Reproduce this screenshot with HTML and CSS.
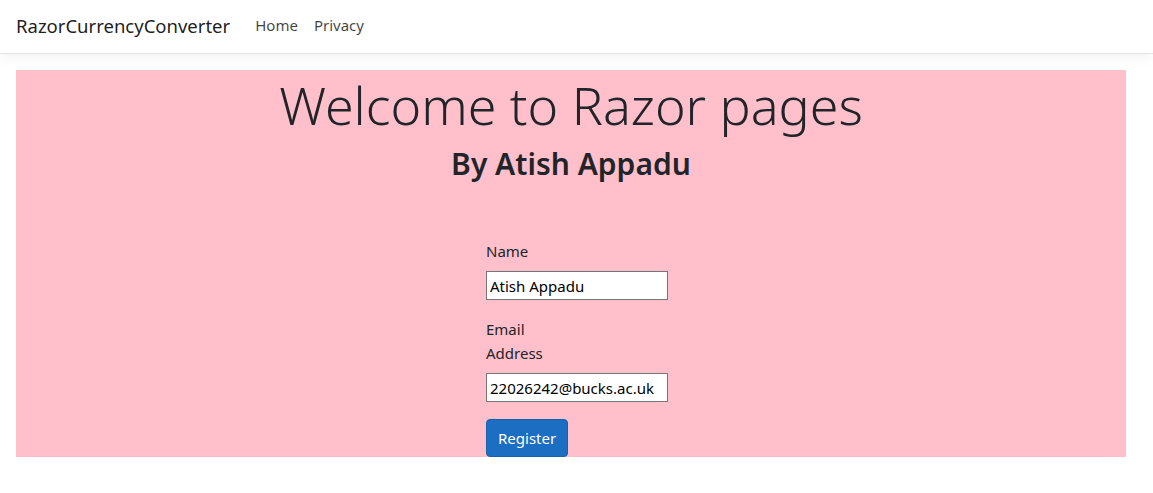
FILE: index.html
```html
<!DOCTYPE html>
<html lang="en">
<head>
<meta charset="utf-8">
<title>RazorCurrencyConverter</title>
<link rel="stylesheet" href="styles.css">
</head>
<body>
<header class="navbar">
  <div class="nav-inner">
    <a class="brand" href="#">RazorCurrencyConverter</a>
    <nav class="links">
      <a class="nav-link" href="#">Home</a>
      <a class="nav-link" href="#">Privacy</a>
    </nav>
  </div>
</header>
<main class="container">
  <section class="hero">
    <h1 class="display">Welcome to Razor pages</h1>
    <h2 class="byline">By Atish Appadu</h2>
    <form class="reg-form">
      <label class="field-label" for="name">Name</label>
      <input class="field-input" id="name" type="text" value="Atish Appadu">
      <label class="field-label" for="email">Email Address</label>
      <input class="field-input" id="email" type="text" value="22026242@bucks.ac.uk">
      <button class="btn-primary" type="button">Register</button>
    </form>
  </section>
</main>
</body>
</html>
```
FILE: styles.css
```css
* { box-sizing: border-box; }
html, body { margin: 0; padding: 0; }
body {
  font-family: "Noto Sans", "Open Sans", sans-serif;
  color: #212529;
  background: #fff;
  font-size: 15px;
  line-height: 1.5;
}
.navbar {
  height: 54px;
  background: #fff;
  border-bottom: 1px solid #e3e3e3;
  box-shadow: 0 4px 12px rgba(0,0,0,0.05);
  margin-bottom: 16px;
}
.nav-inner {
  height: 53px;
  padding: 0 16px;
  display: flex;
  align-items: center;
}
.brand {
  font-size: 18.5px;
  color: rgba(0,0,0,0.9);
  text-decoration: none;
  margin-right: 17px;
  margin-top: -1px;
}
.links { display: flex; }
.nav-link {
  font-size: 15px;
  color: rgba(0,0,0,0.75);
  text-decoration: none;
  padding: 0 8px;
  margin-top: -2px;
}
.container {
  padding: 0 27px 0 16px;
}
.hero {
  background: #ffc0cb;
  height: 387px;
  display: flex;
  flex-direction: column;
  align-items: center;
  overflow: hidden;
}
.display {
  font-weight: 300;
  font-size: 52px;
  line-height: 1.2;
  margin: 4px 0 0 0;
}
.byline {
  font-weight: 600;
  font-size: 30px;
  line-height: 1.2;
  margin: 10px 0 0 0;
}
.reg-form {
  margin-top: 57px;
  width: 182px;
  margin-left: 12px;
  display: flex;
  flex-direction: column;
  align-items: flex-start;
}
.field-label {
  display: block;
  width: 70px;
  line-height: 24px;
  font-size: 15px;
  margin-bottom: 8px;
}
.field-input {
  width: 182px;
  height: 29px;
  border: 1px solid #767676;
  padding: 1px 3px;
  font-family: "Noto Sans", sans-serif;
  font-size: 15px;
  color: #000;
  background: #fff;
  margin: 0 0 17px 0;
}
.btn-primary {
  background: #1b6ec2;
  border: 1px solid #1861ac;
  color: #fff;
  border-radius: 4px;
  font-family: "Noto Sans", sans-serif;
  font-size: 15px;
  height: 38px;
  padding: 0 11px;
}
```
